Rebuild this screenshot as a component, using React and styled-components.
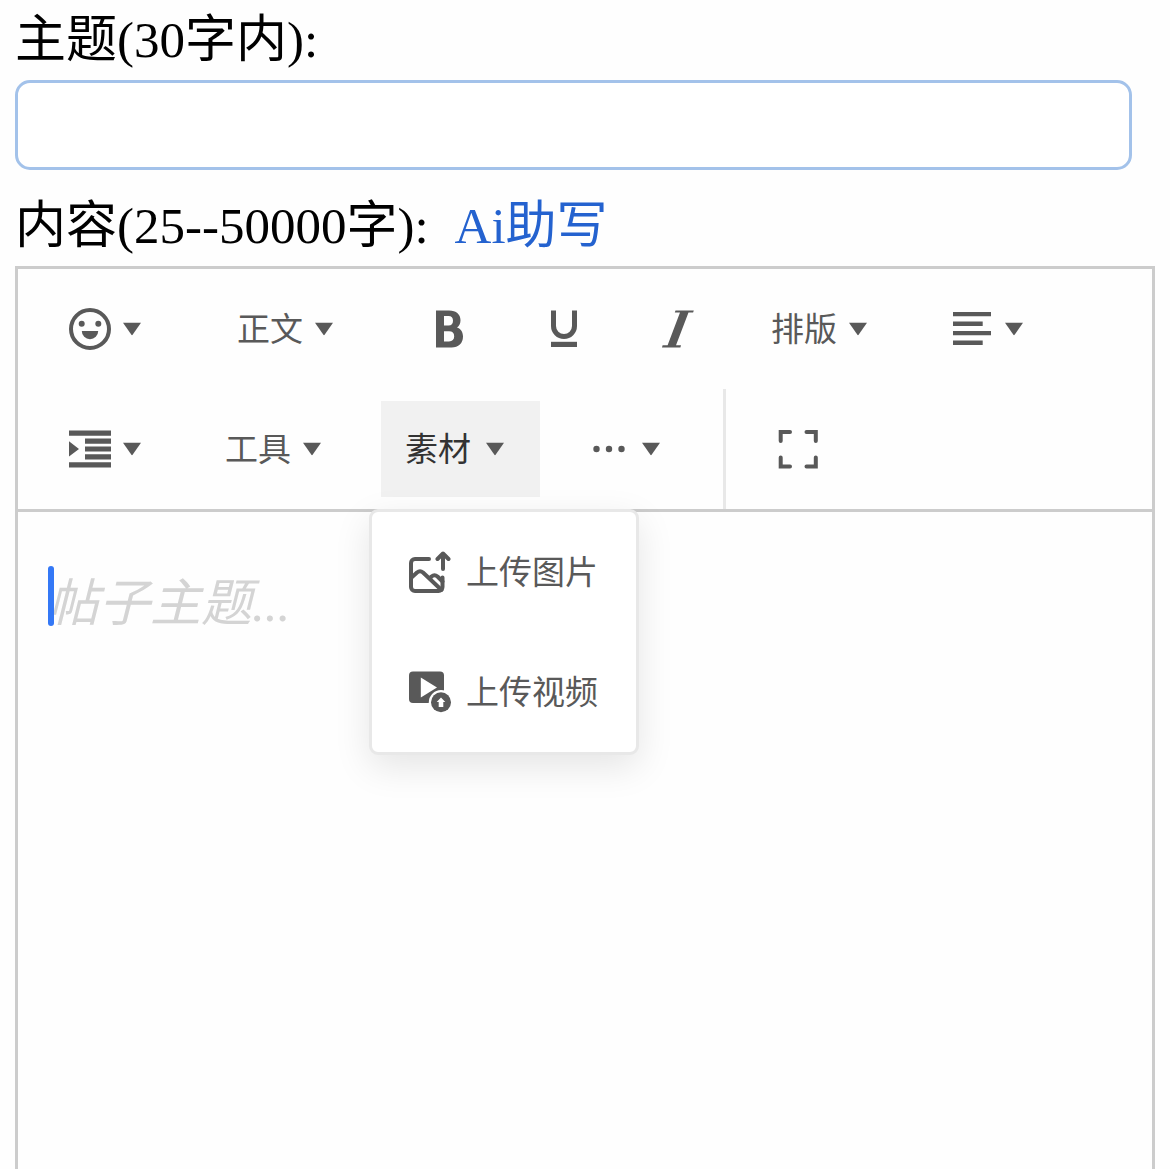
import React from "react";
import styled, { ThemeProvider, createGlobalStyle } from "styled-components";

const theme = {
  colors: {
    text: "#000000",
    link: "#2462cf",
    inputBorder: "#a3c2ea",
    border: "#cccccc",
    divider: "#e8e8e8",
    icon: "#595959",
    active: "#333333",
    activeBg: "#f1f1f1",
    placeholder: "#d4d4d4",
    caret: "#3478f6",
  },
  fonts: {
    serif: '"Liberation Serif", "Noto Sans CJK SC", serif',
    sans: '"Noto Sans", "Noto Sans CJK SC", sans-serif',
  },
};

const GlobalStyle = createGlobalStyle`
  *, *::before, *::after {
    box-sizing: border-box;
  }

  body {
    margin: 0;
    background: #fefefe;
  }

  button, input, textarea {
    margin: 0;
    font: inherit;
  }
`;

const Page = styled.main`
  display: flex;
  flex-direction: column;
  height: 100vh;
  padding: 10px 15px 0;
  overflow: hidden;
  color: ${(props) => props.theme.colors.text};
  font-family: ${(props) => props.theme.fonts.serif};
  font-size: 51px;
  line-height: 60px;
`;

const FieldHead = styled.div`
  display: flex;
  flex: none;
  gap: 26px;
  margin-bottom: 10px;
`;

const TitleInput = styled.input`
  flex: none;
  width: 98%;
  height: 90px;
  margin-bottom: 26px;
  padding: 0 15px;
  border: 3px solid ${(props) => props.theme.colors.inputBorder};
  border-radius: 15px;
  outline: none;
  background: #ffffff;
`;

const AiLink = styled.a`
  color: ${(props) => props.theme.colors.link};
  text-decoration: none;
`;

const Editor = styled.section`
  display: flex;
  flex: 1 0 960px;
  flex-direction: column;
  border: 3px solid ${(props) => props.theme.colors.border};
`;

const Toolbar = styled.div`
  display: flex;
  flex-wrap: wrap;
  padding: 0 15px;
  border-bottom: 3px solid ${(props) => props.theme.colors.border};
  font-family: ${(props) => props.theme.fonts.sans};
  font-size: 33px;
`;

const ToolItem = styled.div`
  position: relative;
  height: 120px;
  margin: 0 ${(props) => (props.$wide ? "12px" : "0")};
  padding: 12px;
`;

const ToolButton = styled.button`
  display: flex;
  align-items: center;
  gap: ${(props) => (props.$active ? "3px" : "0")};
  height: 96px;
  padding: 0 24px;
  border: 0;
  background: ${(props) =>
    props.$active ? props.theme.colors.activeBg : "transparent"};
  color: ${(props) =>
    props.$active ? props.theme.colors.active : props.theme.colors.icon};
  white-space: nowrap;
  cursor: pointer;
`;

const Divider = styled.div`
  width: 3px;
  height: 120px;
  margin: 0 15px;
  background: ${(props) => props.theme.colors.divider};
`;

const Icon = styled.svg`
  flex: none;
  width: 42px;
  height: 42px;
  color: ${(props) => props.theme.colors.icon};
`;

const DropPanel = styled.div`
  position: absolute;
  top: 100%;
  left: 0;
  z-index: 2;
  min-width: 270px;
  border: 3px solid ${(props) => props.theme.colors.divider};
  border-radius: 9px;
  background: #ffffff;
  box-shadow: 0 12px 36px rgba(0, 0, 0, 0.1);
`;

const DropButton = styled.button`
  display: flex;
  align-items: center;
  gap: 15px;
  width: 100%;
  height: 120px;
  padding: 0 37px;
  border: 0;
  background: transparent;
  color: ${(props) => props.theme.colors.icon};
  white-space: nowrap;
  cursor: pointer;
`;

const Content = styled.div`
  position: relative;
  display: flex;
  flex: 1;
  padding: 62px 30px 30px;
`;

const ContentInput = styled.textarea`
  flex: 1;
  min-width: 0;
  padding: 0;
  border: 0;
  outline: none;
  resize: none;
  background: transparent;

  &::placeholder {
    color: ${(props) => props.theme.colors.placeholder};
    font-style: italic;
    opacity: 1;
  }
`;

// text cursor drawn over the start of the first line
const Caret = styled.span`
  position: absolute;
  top: 54px;
  left: 30px;
  width: 6px;
  height: 60px;
  border-radius: 3px;
  background: ${(props) => props.theme.colors.caret};
`;

const icons = {
  arrow: <path d="M12 14.8h18L21.6 26.8q-.6.7-1.200 0z" />,
  emoji: (
    <>
      <circle cx="21" cy="21" r="19" fill="none" stroke="currentColor" strokeWidth="4" />
      <circle cx="12.7" cy="15.7" r="3" />
      <circle cx="29.3" cy="15.7" r="3" />
      <path d="M12.8 23h16.4a8.2 8.2 0 0 1-16.4 0z" />
    </>
  ),
  bold: (
    <path
      fillRule="evenodd"
      d="M7 2.500h13c7.500 0 11.500 4 11.500 9.700 0 3.300-1.200 5.700-3.500 7.200 3.800 1.400 6 4.500 6 9.200 0 6.800-4.500 10.900-11.500 10.900H7zM15 8v9.500h4.500c3 0 4.500-1.800 4.500-4.800S22.500 8 19.500 8zM15 23.300V33.500h5c3.400 0 5.200-1.900 5.200-5.200s-1.800-5-5.200-5z"
    />
  ),
  underline: (
    <>
      <path d="M10.5 2.5V18a10.5 10.500 0 0 0 21 0V2.500" fill="none" stroke="currentColor" strokeWidth="5" />
      <path d="M8 33.800h26V39H8z" />
    </>
  ),
  italic: <path d="M18.500 2.400h18.300l-.7 2.200H31.500L19 37.200h5l-.6 2.200H5l.6-2.200h5L23 4.600h-5.200z" />,
  align: <path d="M2 4h38v4.300H2zM2 13.600h29.700v4.300H2zM2 23h38v4.300H2zM2 32.600h29.700v4.300H2z" />,
  indent: (
    <path d="M0 2.500h42v5.200H0zM16 10.600h26v5.200H16zM16 18.400h26v5.200H16zM16 26.300h26v5.200H16zM0 34.200h42v5.200H0zM0 13.300l10 7.700L0 28.600z" />
  ),
  more: (
    <>
      <circle cx="8.5" cy="21" r="3.2" />
      <circle cx="21" cy="21" r="3.2" />
      <circle cx="33.5" cy="21" r="3.2" />
    </>
  ),
  full: (
    <path
      d="M13 4H3.700v9M29.500 4h9.300v9M13 38.500H3.700v-9M29.500 38.500h9.300v-9"
      fill="none"
      stroke="currentColor"
      strokeWidth="4"
      strokeLinecap="round"
    />
  ),
  image: (
    <g fill="none" stroke="currentColor" strokeWidth="4" strokeLinecap="round" strokeLinejoin="round">
      <path d="M20 8H6a4 4 0 0 0-4 4v24a4 4 0 0 0 4 4h23.500a4 4 0 0 0 4-4V26.500" />
      <path d="M2 27l6-5.500q3-2.500 6 0L32.500 39" />
      <path d="M21 27l1.500-1.500q3-2.500 6 0L33.500 30.500" />
      <path d="M34 18V2.500M28.500 8L34 2.500 39.500 8" />
    </g>
  ),
  video: (
    <>
      <rect x="0" y="0.5" width="35" height="31.5" rx="4" />
      <path d="M11.800 6.500v20L28 16.500z" fill="#fff" />
      <circle cx="32" cy="31.3" r="12.2" fill="#fff" />
      <circle cx="32" cy="31.3" r="10" />
      <path d="M32 26.500l4.300 4.500h-2v5h-4.600v-5h-2z" fill="#fff" />
    </>
  ),
};

const ToolIcon = ({ name }) => (
  <Icon viewBox="0 0 42 42" fill="currentColor" aria-hidden="true">
    {icons[name]}
  </Icon>
);

const App = () => {
  const tools = [
    { name: "表情", icon: "emoji", drop: true },
    { name: "正文", drop: true, wide: true },
    { name: "粗体", icon: "bold" },
    { name: "下划线", icon: "underline" },
    { name: "斜体", icon: "italic" },
    { name: "排版", drop: true },
    { name: "对齐", icon: "align", drop: true },
    { name: "缩进", icon: "indent", drop: true },
    { name: "工具", drop: true },
    {
      name: "素材",
      drop: true,
      menu: [
        { name: "上传图片", icon: "image" },
        { name: "上传视频", icon: "video" },
      ],
    },
    { name: "更多", icon: "more", drop: true },
    { name: "全屏", icon: "full", divided: true },
  ];

  return (
    <Page>
      <FieldHead>
        <label htmlFor="title">主题(30字内):</label>
      </FieldHead>
      <TitleInput id="title" type="text" maxLength={30} />

      <FieldHead>
        <label htmlFor="content">内容(25--50000字):</label>
        <AiLink href="#">Ai助写</AiLink>
      </FieldHead>

      <Editor>
        <Toolbar>
          {tools.map((tool) => (
            <React.Fragment key={tool.name}>
              {tool.divided && <Divider />}
              <ToolItem $wide={tool.wide}>
                <ToolButton
                  type="button"
                  $active={Boolean(tool.menu)}
                  aria-label={tool.icon ? tool.name : undefined}
                >
                  {tool.icon ? <ToolIcon name={tool.icon} /> : tool.name}
                  {tool.drop && <ToolIcon name="arrow" />}
                </ToolButton>
                {tool.menu && (
                  <DropPanel>
                    {tool.menu.map((entry) => (
                      <DropButton key={entry.name} type="button">
                        <ToolIcon name={entry.icon} />
                        {entry.name}
                      </DropButton>
                    ))}
                  </DropPanel>
                )}
              </ToolItem>
            </React.Fragment>
          ))}
        </Toolbar>

        <Content>
          <ContentInput id="content" placeholder="帖子主题..." />
          <Caret />
        </Content>
      </Editor>
    </Page>
  );
};

const ThemedApp = () => (
  <ThemeProvider theme={theme}>
    <GlobalStyle />
    <App />
  </ThemeProvider>
);

export default ThemedApp;
